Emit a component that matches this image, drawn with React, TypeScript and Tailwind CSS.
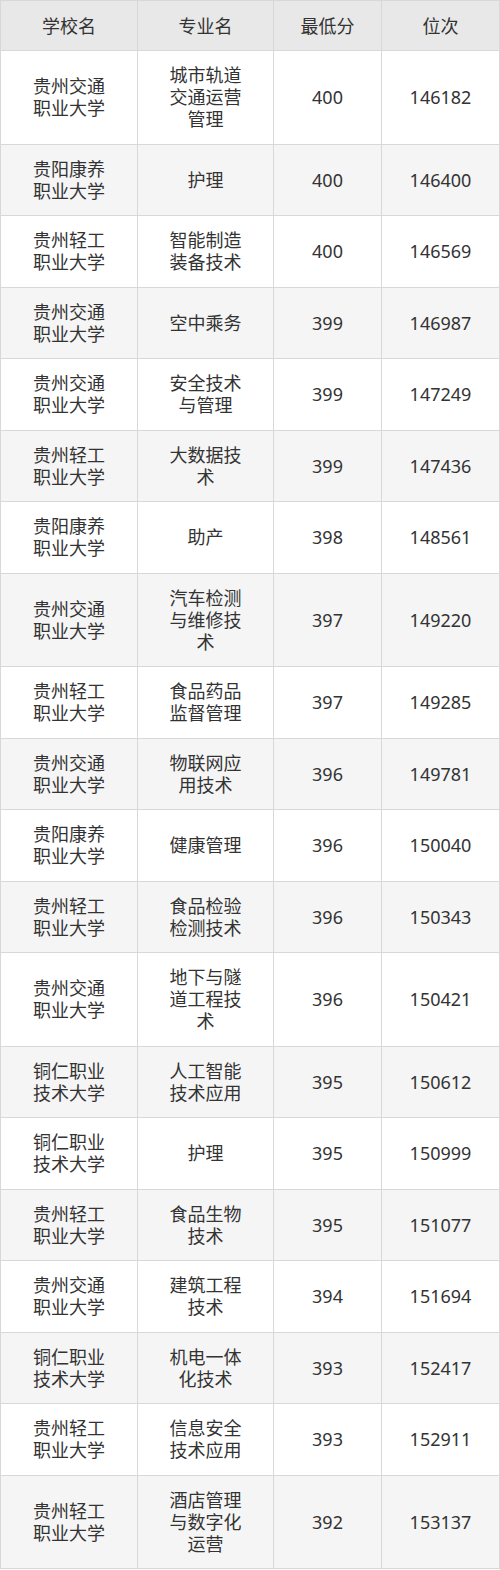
const rows: [string, string, string, string][] = [
	["贵州交通\n职业大学", "城市轨道\n交通运营\n管理", "400", "146182"],
	["贵阳康养\n职业大学", "护理", "400", "146400"],
	["贵州轻工\n职业大学", "智能制造\n装备技术", "400", "146569"],
	["贵州交通\n职业大学", "空中乘务", "399", "146987"],
	["贵州交通\n职业大学", "安全技术\n与管理", "399", "147249"],
	["贵州轻工\n职业大学", "大数据技\n术", "399", "147436"],
	["贵阳康养\n职业大学", "助产", "398", "148561"],
	["贵州交通\n职业大学", "汽车检测\n与维修技\n术", "397", "149220"],
	["贵州轻工\n职业大学", "食品药品\n监督管理", "397", "149285"],
	["贵州交通\n职业大学", "物联网应\n用技术", "396", "149781"],
	["贵阳康养\n职业大学", "健康管理", "396", "150040"],
	["贵州轻工\n职业大学", "食品检验\n检测技术", "396", "150343"],
	["贵州交通\n职业大学", "地下与隧\n道工程技\n术", "396", "150421"],
	["铜仁职业\n技术大学", "人工智能\n技术应用", "395", "150612"],
	["铜仁职业\n技术大学", "护理", "395", "150999"],
	["贵州轻工\n职业大学", "食品生物\n技术", "395", "151077"],
	["贵州交通\n职业大学", "建筑工程\n技术", "394", "151694"],
	["铜仁职业\n技术大学", "机电一体\n化技术", "393", "152417"],
	["贵州轻工\n职业大学", "信息安全\n技术应用", "393", "152911"],
	["贵州轻工\n职业大学", "酒店管理\n与数字化\n运营", "392", "153137"],
];

const headers = ["学校名", "专业名", "最低分", "位次"];

export default function App() {
	return (
		<div className="w-[500px] bg-white font-['Noto_Sans','Noto_Sans_CJK_SC',sans-serif] text-[18px] leading-[22px] text-[#333]">
			<table className="w-[499px] border-collapse table-fixed">
				<colgroup>
					<col className="w-[137px]" />
					<col className="w-[136px]" />
					<col className="w-[108px]" />
					<col className="w-[118px]" />
				</colgroup>
				<thead>
					<tr className="bg-[#e8e8e8]">
						{headers.map((h) => (
							<th key={h} className="border border-[#d8d8d8] h-[50px] px-2 font-normal text-center">
								{h}
							</th>
						))}
					</tr>
				</thead>
				<tbody>
					{rows.map((r, i) => (
						<tr key={i} className={i % 2 === 1 ? "bg-[#f5f5f5]" : "bg-white"}>
							{r.map((c, j) => (
								<td
									key={j}
									className="border border-[#d8d8d8] py-[13.25px] px-2 text-center align-middle whitespace-pre-line"
								>
									{c}
								</td>
							))}
						</tr>
					))}
				</tbody>
			</table>
		</div>
	);
}
